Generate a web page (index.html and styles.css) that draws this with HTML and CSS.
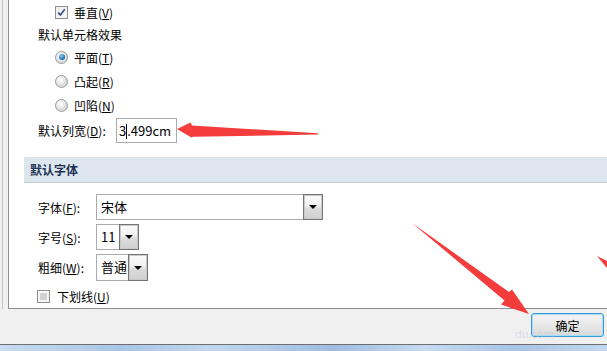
FILE: index.html
```html
<!DOCTYPE html>
<html>
<head>
    <meta charset="utf-8">
    <title>Excel 选项</title>
    <link rel="stylesheet" href="styles.css">
</head>
<body>
    <div class="frame">
        <div class="panel">
            <div class="group">
                <div class="opt">
                    <span class="box checked">
                        <svg width="9" height="9" viewBox="0 0 9 9"><path d="M1.2 4.6 L3.4 7 L7.8 1.2" fill="none" stroke="#3b4f8c" stroke-width="1.7"/></svg>
                    </span>
                    <span>垂直(<u>V</u>)</span>
                </div>
                <div class="caption">默认单元格效果</div>
                <div class="opt">
                    <span class="radio on"></span>
                    <span>平面(<u>T</u>)</span>
                </div>
                <div class="opt">
                    <span class="radio"></span>
                    <span>凸起(<u>R</u>)</span>
                </div>
                <div class="opt">
                    <span class="radio"></span>
                    <span>凹陷(<u>N</u>)</span>
                </div>
                <div class="field">
                    <span class="label">默认列宽(<u>D</u>):</span>
                    <span class="input">3<i class="caret"></i>.499cm</span>
                </div>
            </div>

            <div class="section">默认字体</div>

            <div class="font-form">
                <div class="frow">
                    <span class="flabel">字体(<u>F</u>):</span>
                    <div class="select wide">
                        <span class="val">宋体</span>
                        <span class="dd"><i></i></span>
                    </div>
                </div>
                <div class="frow">
                    <span class="flabel">字号(<u>S</u>):</span>
                    <div class="select size">
                        <span class="val">11</span>
                        <span class="dd"><i></i></span>
                    </div>
                </div>
                <div class="frow tall">
                    <span class="flabel">粗细(<u>W</u>):</span>
                    <div class="select weight">
                        <span class="val">普通</span>
                        <span class="dd"><i></i></span>
                    </div>
                </div>
                <div class="opt under">
                    <span class="box plain"></span>
                    <span>下划线(<u>U</u>)</span>
                </div>
            </div>
        </div>
    </div>
    <div class="footer">
        <button class="ok">确定</button>
    </div>
    <div class="taskbar"></div>

    <div class="watermark">du.com</div>
    <svg class="marks" width="607" height="351" viewBox="0 0 607 351">
        <polygon points="177,129 190.5,122.5 192,125.5 318,133.3 318,134.6 193,136.8 191.5,137.5" fill="#f43c3c"/>
        <polygon points="412,223 509,292 512,289.5 529,314 501,304.5 504.5,300.5" fill="#f43c3c"/>
        <polygon points="597,256 607,261 607,268" fill="#f43c3c"/>
    </svg>
</body>
</html>
```

FILE: styles.css
```css
* {
    box-sizing: border-box;
}
body {
    margin: 0;
    width: 607px;
    height: 351px;
    overflow: hidden;
    position: relative;
    background: #f0f0f0;
    font-family: "Noto Sans CJK SC", "Microsoft YaHei", sans-serif;
    font-size: 12px;
    color: #000;
}
u {
    text-decoration: underline;
    text-underline-offset: 1px;
}
.frame {
    margin-left: 2px;
    padding-left: 5px;
    border-left: 1px solid #c4c4c4;
    height: 309px;
}
.panel {
    height: 309px;
    background: #fff;
    border-left: 1px solid #8d8f94;
    border-bottom: 1px solid #8d8f94;
}
.group {
    padding-left: 29px;
}
.opt {
    display: flex;
    align-items: center;
    height: 24px;
    margin-left: 17px;
}
.box {
    width: 13px;
    height: 13px;
    margin-right: 6px;
    border: 1px solid #8e8f8f;
    background: linear-gradient(135deg, #dcdcdc, #fbfbfb);
    box-shadow: inset 0 0 0 1px #f4f4f4;
    display: flex;
    align-items: center;
    justify-content: center;
}
.box.checked {
    background: linear-gradient(135deg, #e6e6e6, #ffffff);
}
.box.plain {
    background: #fff;
    box-shadow: inset 0 0 0 2px #f6f6f6, inset 0 0 0 6px #d2d2d2;
}
.radio {
    width: 13px;
    height: 13px;
    margin-right: 6px;
    border-radius: 50%;
    border: 1px solid #9a9a9a;
    background: radial-gradient(circle at 40% 35%, #ffffff, #d8d8d8 70%);
    position: relative;
}
.radio.on::after {
    content: "";
    position: absolute;
    left: 2.5px;
    top: 2.5px;
    width: 6px;
    height: 6px;
    border-radius: 50%;
    background: radial-gradient(circle at 40% 35%, #8fd0f5, #136aa9 70%, #0c4f86);
}
.caption {
    height: 21px;
    line-height: 21px;
}
.field {
    display: flex;
    align-items: center;
    margin-top: 1px;
}
.label {
    width: 78px;
}
.input {
    width: 61px;
    height: 25px;
    line-height: 23px;
    padding-left: 2px;
    border: 1px solid #a9aaad;
    font-size: 13px;
}
.caret {
    display: inline-block;
    width: 1px;
    height: 15px;
    background: #000;
    vertical-align: -3px;
}
.section {
    margin: 14px 0 0 15px;
    height: 26px;
    line-height: 25px;
    padding-left: 6px;
    background: #dde6ee;
    border-bottom: 1px solid #c3cdd7;
    color: #1e3354;
    font-weight: bold;
}
.font-form {
    padding-left: 29px;
    margin-top: 11px;
}
.frow {
    display: flex;
    align-items: center;
    height: 26px;
    margin-bottom: 4px;
}
.frow.tall {
    height: 27px;
    margin-bottom: 3px;
}
.flabel {
    width: 58px;
}
.select {
    display: flex;
    height: 100%;
    border: 1px solid #aaacb0;
}
.select.wide {
    width: 227px;
}
.select.size {
    width: 43px;
}
.select.weight {
    width: 52px;
}
.val {
    flex: 1;
    padding-left: 4px;
    line-height: 24px;
    font-size: 13px;
}
.dd {
    width: 20px;
    margin: -1px -1px -1px 0;
    border: 1px solid #747474;
    box-shadow: inset 0 0 0 1px #c9c9c9;
    background: linear-gradient(#fbfbfb 0%, #f0f0f0 45%, #dcdcdc 55%, #cfcfcf 100%);
    display: flex;
    align-items: center;
    justify-content: center;
}
.dd i {
    width: 0;
    height: 0;
    border-left: 4px solid transparent;
    border-right: 4px solid transparent;
    border-top: 4px solid #000;
}
.opt.under {
    margin-left: -1px;
    height: 25px;
}
.opt.under .box {
    margin-right: 7px;
}
.footer {
    height: 36px;
    display: flex;
    justify-content: flex-end;
    align-items: flex-start;
    padding: 4px 3px 0 0;
    border-bottom: 1px solid #6e6e6e;
}
.ok {
    width: 73px;
    height: 24px;
    border: 1px solid #3d9ad6;
    border-radius: 3px;
    box-shadow: inset 0 0 0 1px #a6dcf7;
    background: linear-gradient(#f4f4f4, #e8e8e8 50%, #d9d9d9);
    font-family: "Noto Sans CJK SC", "Microsoft YaHei", sans-serif;
    font-size: 12px;
    color: #000;
    padding: 0;
}
.taskbar {
    height: 6px;
    background: linear-gradient(90deg, #c8dcf2 0%, #a9c6e8 20%, #c1d7f0 35%, #9fbde3 55%, #c6daf1 70%, #a8c4e7 85%, #c3d8f0 100%);
}
.watermark {
    position: absolute;
    left: 515px;
    top: 327px;
    font-size: 11px;
    line-height: 12px;
    color: rgba(190, 200, 215, 0.5);
}
.marks {
    position: absolute;
    left: 0;
    top: 0;
    pointer-events: none;
}
```
